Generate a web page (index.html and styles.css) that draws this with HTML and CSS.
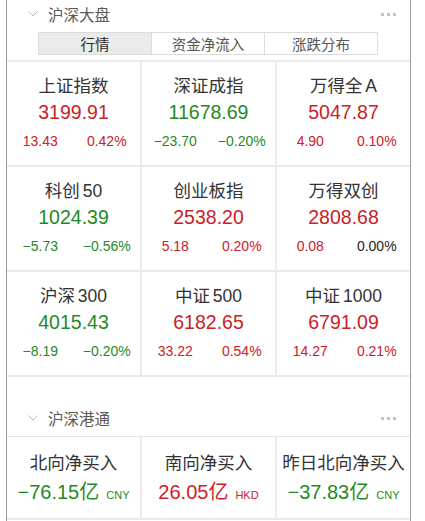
FILE: index.html
```html
<!DOCTYPE html>
<html lang="zh">
<head>
<meta charset="utf-8">
<link rel="stylesheet" href="styles.css">
</head>
<body>
<div class="frame">
  <div class="sec-head first">
    <svg class="chev" width="10" height="6" viewBox="0 0 10 6"><path d="M0.5 0.5 L5 5 L9.5 0.5" fill="none" stroke="#b8b8b8" stroke-width="1"/></svg>
    <span class="sec-title">沪深大盘</span>
    <span class="dots"><i></i><i></i><i></i></span>
  </div>
  <div class="tabs">
    <div class="tab active">行情</div>
    <div class="tab">资金净流入</div>
    <div class="tab">涨跌分布</div>
  </div>
  <div class="grid">
    <div class="cell">
      <div class="name">上证指数</div>
      <div class="val up">3199.91</div>
      <div class="chg"><span class="up">13.43</span><span class="up">0.42%</span></div>
    </div>
    <div class="cell">
      <div class="name">深证成指</div>
      <div class="val down">11678.69</div>
      <div class="chg"><span class="down">−23.70</span><span class="down">−0.20%</span></div>
    </div>
    <div class="cell">
      <div class="name">万得全 A</div>
      <div class="val up">5047.87</div>
      <div class="chg"><span class="up">4.90</span><span class="up">0.10%</span></div>
    </div>
    <div class="cell">
      <div class="name">科创 50</div>
      <div class="val down">1024.39</div>
      <div class="chg"><span class="down">−5.73</span><span class="down">−0.56%</span></div>
    </div>
    <div class="cell">
      <div class="name">创业板指</div>
      <div class="val up">2538.20</div>
      <div class="chg"><span class="up">5.18</span><span class="up">0.20%</span></div>
    </div>
    <div class="cell">
      <div class="name">万得双创</div>
      <div class="val up">2808.68</div>
      <div class="chg"><span class="up">0.08</span><span class="flat">0.00%</span></div>
    </div>
    <div class="cell">
      <div class="name">沪深 300</div>
      <div class="val down">4015.43</div>
      <div class="chg"><span class="down">−8.19</span><span class="down">−0.20%</span></div>
    </div>
    <div class="cell">
      <div class="name">中证 500</div>
      <div class="val up">6182.65</div>
      <div class="chg"><span class="up">33.22</span><span class="up">0.54%</span></div>
    </div>
    <div class="cell">
      <div class="name">中证 1000</div>
      <div class="val up">6791.09</div>
      <div class="chg"><span class="up">14.27</span><span class="up">0.21%</span></div>
    </div>
  </div>
  <div class="sec-head second">
    <svg class="chev" width="10" height="6" viewBox="0 0 10 6"><path d="M0.5 0.5 L5 5 L9.5 0.5" fill="none" stroke="#b8b8b8" stroke-width="1"/></svg>
    <span class="sec-title">沪深港通</span>
    <span class="dots"><i></i><i></i><i></i></span>
  </div>
  <div class="flow">
    <div class="fcell">
      <div class="name">北向净买入</div>
      <div class="fval down">−76.15亿<small>CNY</small></div>
    </div>
    <div class="fcell">
      <div class="name">南向净买入</div>
      <div class="fval up">26.05亿<small>HKD</small></div>
    </div>
    <div class="fcell">
      <div class="name">昨日北向净买入</div>
      <div class="fval down">−37.83亿<small>CNY</small></div>
    </div>
  </div>
</div>
</body>
</html>
```
FILE: styles.css
```css
html, body {
  margin: 0;
  padding: 0;
  background: #ffffff;
}
body {
  font-family: "Liberation Sans", "Noto Sans CJK SC", sans-serif;
  color: #333;
}
.frame {
  margin-left: 6px;
  width: 403px;
  border-left: 1px solid #9a9a9a;
  border-right: 1px solid #9a9a9a;
  min-height: 521px;
}
.sec-head {
  display: flex;
  align-items: center;
  padding-left: 21px;
  padding-right: 14px;
}
.sec-head.first {
  height: 27px;
}
.sec-head.first .dots { margin-top: 2px; }
.sec-head.second {
  padding-top: 29px;
  height: 30px;
  border-bottom: 1px solid #e6e6e6;
  align-items: flex-start;
}
.sec-head.second .chev { margin-top: 9px; }
.sec-head.second .dots { margin-top: 11px; }
.chev {
  display: block;
  margin-right: 10px;
}
.sec-title {
  font-family: "Noto Sans CJK SC", sans-serif;
  font-size: 15.5px;
  line-height: 24px;
  color: #5a5a5a;
  flex: 1;
}
.dots {
  display: flex;
  gap: 3px;
}
.dots i {
  display: block;
  width: 3px;
  height: 3px;
  background: #c4c4c4;
}
.tabs {
  display: flex;
  margin-left: 31px;
  width: 338px;
  height: 21px;
  border: 1px solid #dcdcdc;
  margin-top: 5px;
}
.tab {
  flex: 1;
  text-align: center;
  font-family: "Noto Sans CJK SC", sans-serif;
  font-size: 14.5px;
  line-height: 21px;
  color: #555;
  border-left: 1px solid #dcdcdc;
}
.tab:first-child { border-left: none; }
.tab.active {
  background: #ebebeb;
  color: #2a2a2a;
}
.grid {
  margin-top: 5px;
  display: grid;
  grid-template-columns: 1fr 1fr 1fr;
  gap: 2px;
  background: #ebebeb;
  border-top: 2px solid #ebebeb;
  border-bottom: 2px solid #ebebeb;
}
.cell {
  background: #fff;
  height: 103px;
  padding-top: 12px;
  box-sizing: border-box;
  text-align: center;
}
.name {
  font-family: "Liberation Sans", "Noto Sans CJK SC", sans-serif;
  font-size: 17.5px;
  line-height: 24px;
  color: #333;
  word-spacing: -2px;
}
.val {
  font-size: 19.5px;
  line-height: 28px;
}
.chg {
  display: flex;
  margin-top: 5px;
  font-size: 14px;
  line-height: 20px;
}
.chg span {
  flex: 1;
  text-align: center;
}
.up { color: #cc2127; }
.down { color: #1f8a24; }
.flat { color: #222; }
.flow {
  display: grid;
  grid-template-columns: 1fr 1fr 1fr;
  gap: 2px;
  background: #ebebeb;
  border-bottom: 2px solid #ebebeb;
}
.fcell {
  background: #fff;
  height: 81px;
  padding-top: 14px;
  box-sizing: border-box;
  text-align: center;
}
.fval {
  font-size: 20px;
  line-height: 30px;
  margin-top: 2px;
}
.fval small {
  font-size: 11px;
  margin-left: 7px;
}
```
